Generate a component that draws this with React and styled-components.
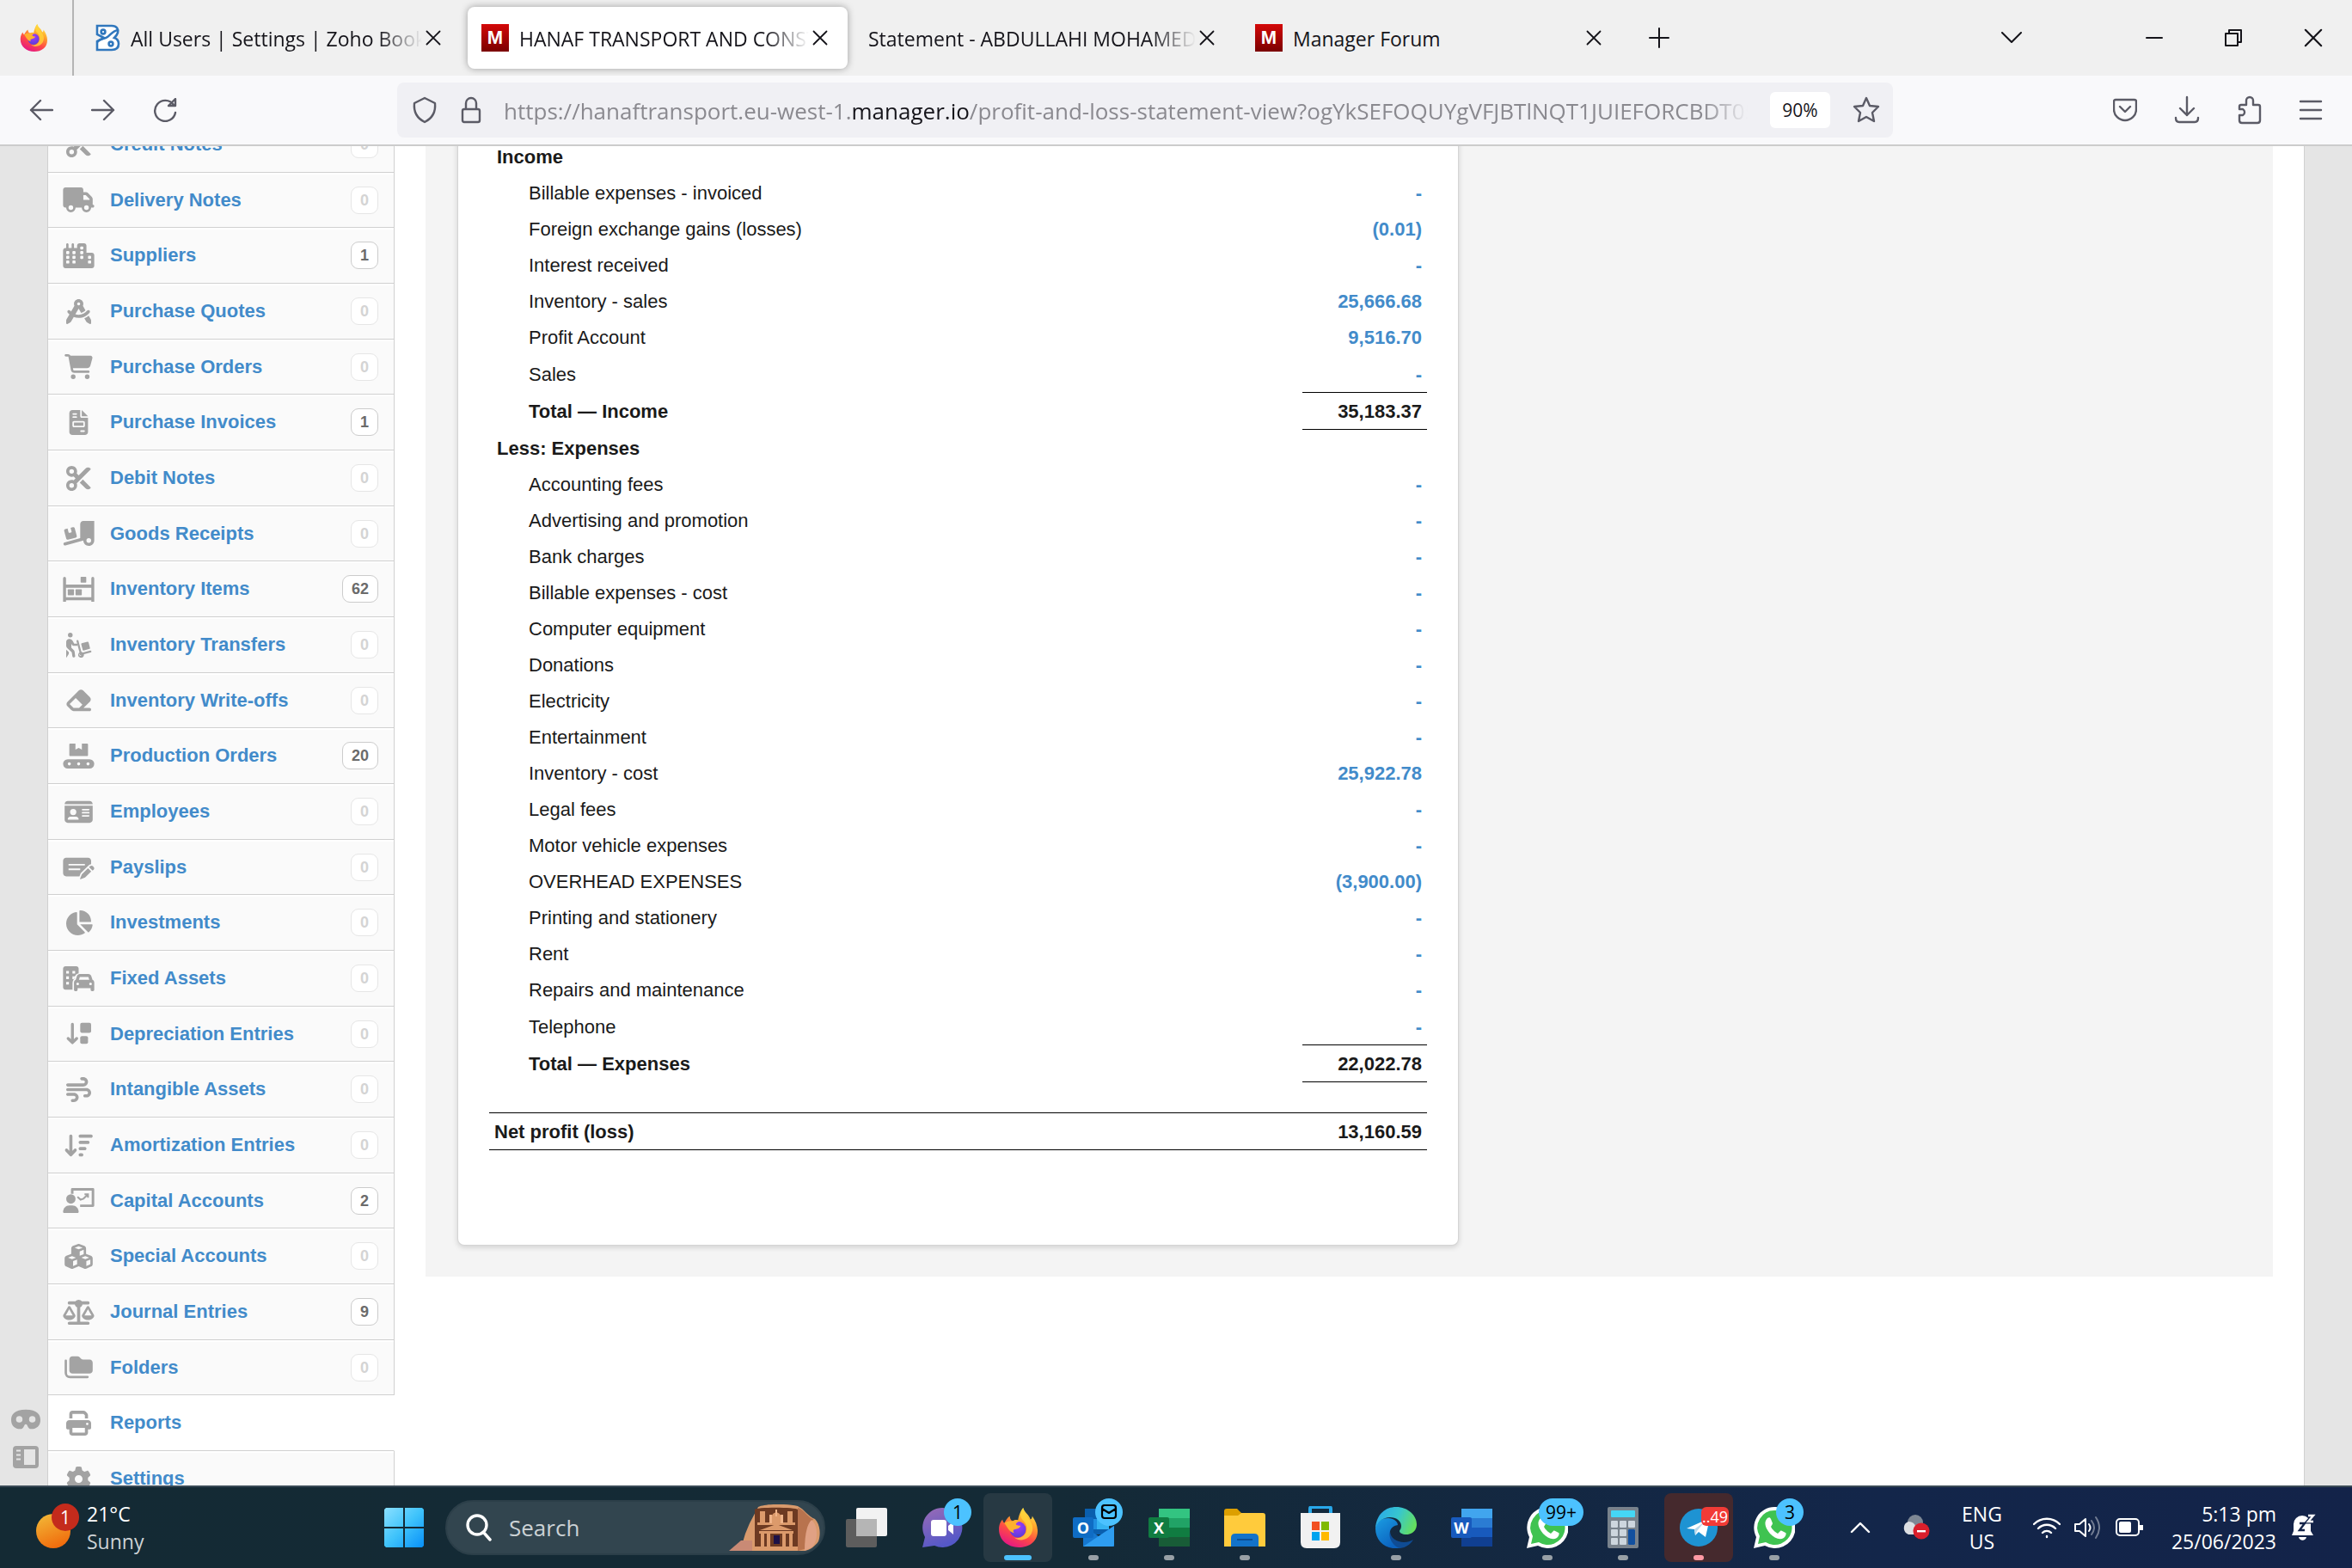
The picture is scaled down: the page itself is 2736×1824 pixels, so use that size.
import React from 'react';
import styled, { createGlobalStyle, css } from 'styled-components';
import {
    FaScissors, FaTruck, FaCity, FaCompassDrafting, FaCartShopping, FaFileInvoice,
    FaTruckRampBox, FaEraser, FaIdCard, FaChartPie, FaWind, FaArrowDownWideShort,
    FaCubes, FaScaleBalanced, FaPrint, FaGear, FaMask,
} from 'react-icons/fa6';

const GlobalStyle = createGlobalStyle`
    * { box-sizing: border-box; }
    html, body, #root { height: 100%; }
    body {
        margin: 0;
        overflow: hidden;
        font-family: "Liberation Sans", Arial, sans-serif;
        font-size: 22px;
        color: #1a1a1a;
        background: #e5e5e5;
    }
    button {
        border: 0;
        padding: 0;
        background: none;
        font: inherit;
        color: inherit;
        cursor: pointer;
    }
    a { color: #428bca; text-decoration: none; }
    svg { display: block; flex-shrink: 0; }
`;

const uiFont = css`font-family: "Open Sans", "Noto Sans", sans-serif;`;

const Desktop = styled.div`
    display: flex;
    flex-direction: column;
    height: 100vh;
`;

/* ---------- browser chrome ---------- */

const TabBar = styled.header`
    ${uiFont}
    display: flex;
    align-items: center;
    flex-shrink: 0;
    height: 88px;
    background: #f0f0f0;
    font-size: 23px;
    color: #15141a;
`;

const PinnedTab = styled.button`
    display: flex;
    align-items: center;
    justify-content: center;
    width: 86px;
    height: 88px;
    padding-right: 6px;
    border-right: 2px solid #b4b4b4;
`;

const Tabs = styled.div`
    display: flex;
    gap: 8px;
    margin: 0 24px 0 8px;
`;

const Tab = styled.div`
    display: flex;
    align-items: center;
    width: 442px;
    height: 72px;
    padding: 0 23px 0 16px;
    border-radius: 8px;
    background: ${(props) => (props.$active ? '#fff' : 'transparent')};
    box-shadow: ${(props) => (props.$active ? '0 0 8px rgba(0,0,0,0.35)' : 'none')};
`;

const TabTitle = styled.button`
    flex: 1;
    min-width: 0;
    margin: 0 4px 0 ${(props) => (props.$icon ? '12px' : '0')};
    padding-top: 2px;
    overflow: hidden;
    white-space: nowrap;
    text-align: left;
    line-height: 36px;
    mask-image: ${(props) => (props.$fade ? 'linear-gradient(to left, transparent, #000 52px)' : 'none')};
`;

const CloseTab = styled.button`
    width: 18px;
    height: 18px;
`;

const WindowButtons = styled.div`
    display: flex;
    align-items: center;
    margin-left: auto;
    padding-right: 34px;
    gap: 72px;
`;

const ListTabs = styled.button`
    margin-right: 72px;
`;

const Toolbar = styled.div`
    ${uiFont}
    display: flex;
    align-items: center;
    flex-shrink: 0;
    height: 82px;
    padding: 0 34px;
    background: #f9f9fb;
    border-bottom: 2px solid #ccc;
    color: #5b5b66;
`;

const ToolGroup = styled.div`
    display: flex;
    gap: 44px;
`;

const AddressBar = styled.div`
    display: flex;
    align-items: center;
    flex: 1;
    min-width: 0;
    height: 64px;
    margin: 0 256px;
    padding: 0 15px 0 16px;
    gap: 26px;
    border-radius: 8px;
    background: #f0f0f4;
`;

const Address = styled.div`
    flex: 1;
    min-width: 0;
    padding-top: 2px;
    overflow: hidden;
    white-space: nowrap;
    font-size: 26px;
    line-height: 40px;
    color: #8a898f;
    mask-image: linear-gradient(to left, transparent, #000 52px);

    b {
        font-weight: 400;
        color: #15141a;
    }
`;

const ZoomLevel = styled.button`
    width: 70px;
    height: 42px;
    border-radius: 6px;
    background: #fff;
    font-size: 21px;
    color: #15141a;
`;

/* ---------- page ---------- */

const PageView = styled.div`
    display: flex;
    flex: 1;
    min-height: 0;
    overflow: hidden;
`;

const Rail = styled.div`
    display: flex;
    flex-direction: column;
    align-items: center;
    justify-content: flex-end;
    gap: 14px;
    width: 55px;
    padding: 0 0 20px 4px;
    color: #a3a3a3;
`;

// the page is scrolled, its first row is half hidden
const Page = styled.div`
    display: flex;
    align-items: flex-start;
    align-self: flex-start;
    flex: 1;
    margin: -34px 55px 0 0;
    border: solid #d0d0d0;
    border-width: 0 1px;
    background: #fff;
`;

const Nav = styled.nav`
    width: 403px;
    flex-shrink: 0;
`;

const NavRow = styled.a`
    display: flex;
    align-items: center;
    gap: 18px;
    height: 65px;
    padding: 0 18px 0 17px;
    border-bottom: 1px solid #d0d0d0;
    border-right: 1px solid ${(props) => (props.$current ? '#fff' : '#d0d0d0')};
    background: ${(props) => (props.$current ? '#fff' : '#fafafa')};
    box-shadow: inset 0 2px #fff;
    font-weight: bold;
    line-height: 26px;

    &:nth-child(3n + 2) { height: 64px; }

    > svg {
        width: 37px;
        height: 29px;
        color: #a3a3a3;
    }
`;

const Count = styled.span`
    margin-left: auto;
    padding: 0 10px;
    border: 1px solid ${(props) => (props.$empty ? '#e6e6e6' : '#ccc')};
    border-radius: 9px;
    background: #fff;
    font-size: 18px;
    line-height: 30px;
    color: ${(props) => (props.$empty ? '#d4d4d4' : '#6b6b6b')};
`;

const Panel = styled.main`
    flex: 1;
    margin: 0 36px;
    padding: 0 37px 36px;
    background: #f4f4f4;
`;

const Sheet = styled.section`
    width: 1165px;
    padding: 25px 36px 110px;
    border: 1px solid #d4d4d4;
    border-top: 0;
    border-radius: 0 0 8px 8px;
    background: #fff;
    box-shadow: 0 2px 6px rgba(0,0,0,0.15);
`;

const Report = styled.table`
    width: 100%;
    border-collapse: separate;
    border-spacing: 0;

    th, td {
        height: 42px;
        padding: 2px 6px 0;
        line-height: 26px;
        text-align: left;
        font-weight: normal;
    }
    td:last-child {
        width: 145px;
        text-align: right;
        font-weight: bold;
    }
`;

const HeadRow = styled.tr`
    && th {
        padding-left: 9px;
        font-weight: bold;
    }
`;

const ItemRow = styled.tr`
    && th { padding-left: 46px; }
    &&:nth-last-child(2) > * { height: 43px; }
`;

const TotalRow = styled.tr`
    && > * {
        height: 44px;
        font-weight: bold;
    }
    && th { padding-left: 46px; }
    && td {
        border: solid #000;
        border-width: 1px 0;
    }
`;

const NetRow = styled.tr`
    && > * {
        height: 44px;
        border: solid #000;
        border-width: 1px 0;
        font-weight: bold;
    }
`;

const Spacer = styled.tr`
    && > td { height: 35px; }
`;

/* ---------- taskbar ---------- */

const Taskbar = styled.footer`
    ${uiFont}
    display: flex;
    align-items: center;
    flex-shrink: 0;
    height: 96px;
    border-top: 2px solid #3a4a56;
    background: linear-gradient(90deg, #142a34 0%, #142a36 45%, #13264a 80%, #132349 100%);
    font-size: 23px;
    line-height: 32px;
    color: #fff;
`;

const Weather = styled.button`
    display: flex;
    align-items: center;
    gap: 8px;
    width: 430px;
    padding-left: 40px;
    text-align: left;

    small {
        display: block;
        font-size: 23px;
        color: #cdd3d6;
    }
`;

const Apps = styled.div`
    display: flex;
    gap: 8px;
`;

const App_ = styled.button`
    position: relative;
    display: flex;
    align-items: center;
    justify-content: center;
    width: 80px;
    height: 80px;
    border-radius: 8px;
    background: ${(props) => props.$bg || 'transparent'};

    &::after {
        content: "";
        position: absolute;
        bottom: 2px;
        left: 50%;
        width: ${(props) => (props.$focus ? '32px' : '12px')};
        height: 6px;
        border-radius: 3px;
        transform: translateX(-50%);
        background: ${(props) => props.$mark || 'transparent'};
    }
`;

const Badge = styled.span`
    position: absolute;
    top: 6px;
    left: ${(props) => (props.$wide ? '30px' : '42px')};
    display: flex;
    align-items: center;
    justify-content: center;
    min-width: 32px;
    height: 32px;
    padding: 0 ${(props) => (props.$wide ? '8px' : '0')};
    border-radius: 16px;
    background: #4cc2ff;
    font-size: 21px;
    color: #000;
`;

const RedBadge = styled(Badge)`
    top: 16px;
    left: 43px;
    height: 22px;
    border-radius: 6px;
    background: #f23b36;
    font-size: 18px;
    color: #fff;
`;

const SearchBox = styled.label`
    display: flex;
    align-items: center;
    gap: 20px;
    width: 442px;
    height: 64px;
    margin: auto 0;
    padding: 0 4px 0 22px;
    border: 2px solid #2c3f49;
    border-radius: 32px;
    background: #32454f;

    input {
        flex: 1;
        min-width: 0;
        padding: 0;
        border: 0;
        outline: 0;
        background: none;
        font: inherit;
        font-size: 26px;
        color: #fff;
    }
    input::placeholder { color: #ccd2d5; opacity: 1; }
`;

const Tray = styled.div`
    display: flex;
    align-items: center;
    margin-left: auto;
    padding-right: 42px;
`;

const Language = styled.button`
    margin: 0 36px;
    text-align: center;
`;

const Status = styled.button`
    display: flex;
    align-items: center;
    gap: 16px;
`;

const Clock = styled.button`
    margin: 0 18px 0 32px;
    text-align: right;
`;

const Overflow = styled.button`
    margin-right: 36px;
`;

/* ---------- small drawings ---------- */

const Line = ({ d, w = 28, h = 28, box = '0 0 28 28', sw = 2.4, children, ...rest }) => (
    <svg width={w} height={h} viewBox={box} fill="none" stroke="currentColor" strokeWidth={sw}
        strokeLinecap="round" strokeLinejoin="round" {...rest}>
        {d && <path d={d} />}
        {children}
    </svg>
);

const CloseX = ({ size = 18 }) => (
    <Line w={size} h={size} box="0 0 18 18" sw={1.8} d="M1.5 1.5l15 15M16.5 1.5l-15 15" />
);

const Firefox = ({ size, id }) => (
    <svg width={size} height={size} viewBox="0 0 44 44">
        <defs>
            <linearGradient id={id + 'a'} x1="0.8" y1="0" x2="0.3" y2="1">
                <stop offset="0" stopColor="#fff44f" />
                <stop offset="0.35" stopColor="#ffa22b" />
                <stop offset="0.65" stopColor="#ff4a45" />
                <stop offset="1" stopColor="#e31587" />
            </linearGradient>
            <radialGradient id={id + 'b'} cx="0.5" cy="0.3" r="0.7">
                <stop offset="0" stopColor="#a238ff" />
                <stop offset="1" stopColor="#5b3fd6" />
            </radialGradient>
        </defs>
        <path fill={`url(#${id}a)`} d="M28 0c1 5 7 8 8 13 2-1 2-3 2-4 4 6 6 11 6 17 0 11-9 18-21 18S1 36 1 24c0-5 2-9 4-11 0 2 1 3 2 4 1-2 3-6 6-8 0 2 1 4 2 5l7 1c1-6 3-12 6-15z" />
        <circle cx="22" cy="24" r="9" fill={`url(#${id}b)`} />
        <path fill="#ffb02e" d="M7 17c3-2 6-3 9-2 2-2 6-2 9 0-3 0-5 2-5 3 0 2 4 2 5 2-1 3-4 3-6 4-2 0-3 2-1 4-6-1-7-6-11-11z" />
        <path fill="#ffd43a" d="M28 0c-3 4-4 9-1 13 4 4 6 8 4 14-2 5-8 8-13 6 6 5 15 3 19-4 4-9-1-14-4-18-2-3-5-6-5-11z" opacity=".8" />
    </svg>
);

const Zoho = () => (
    <svg width="30" height="32" viewBox="0 0 30 32" fill="none" stroke="#3077bd" strokeWidth="2.6">
        <path fill="#fff" d="M3 2h17c6 0 8 4 7 8-1 3-3 5-4 6 3 1 5 4 5 7 0 5-3 7-8 7H3V20l8-4-8-4z" />
        <path d="M3 21c4-5 8-3 12-6s6-7 12-8" />
        <circle cx="10" cy="9" r="2.4" />
        <circle cx="19" cy="23" r="2.4" />
    </svg>
);

const MBadge = styled.span`
    display: flex;
    align-items: center;
    justify-content: center;
    flex-shrink: 0;
    width: 32px;
    height: 32px;
    background: linear-gradient(#d40808, #7a0000);
    font: bold 22px "Liberation Sans", Arial, sans-serif;
    color: #fff;
`;

// wide glyphs share the 640x512 grid of the icon font
const Glyph = ({ children, box = '0 0 640 512' }) => (
    <svg viewBox={box} fill="currentColor">{children}</svg>
);

const Shelves = () => (
    <Glyph>
        <path d="M0 30a30 30 0 0160 0v130h520V30a30 30 0 0160 0v482h-60v-30H60v30H0zM60 225v195h520V225z" fillRule="evenodd" />
        <rect x="360" y="0" width="116" height="118" rx="12" />
        <rect x="96" y="256" width="128" height="124" rx="12" />
        <rect x="256" y="256" width="128" height="124" rx="12" />
    </Glyph>
);

const PersonDolly = () => (
    <Glyph box="0 0 512 512">
        <circle cx="84" cy="48" r="48" />
        <path d="M0 190c0-38 28-62 66-62 34 0 54 16 70 44l28 52h52c28 0 28 46 0 46h-66c-14 0-22-6-30-18l-14-24v80l50 50c10 10 14 20 16 32l12 88c4 34-50 42-56 8l-14-86L32 328C8 306 0 290 0 262z" />
        <path d="M0 350l56 50-4 36-40 66c-4 8-12 8-12 2z" />
        <path d="M232 170l66 250M298 440l200-54" fill="none" stroke="currentColor" strokeWidth="40" strokeLinecap="round" />
        <path fillRule="evenodd" d="M290 396a60 60 0 110 116 60 60 0 010-116zm0 38a20 20 0 100 40 20 20 0 000-40z" />
        <path d="M308 236c-3-10 2-18 11-21l118-30c10-3 18 2 21 11l31 116c3 10-2 18-11 21l-118 32c-10 3-18-2-21-11z" />
    </Glyph>
);

const Conveyor = () => (
    <Glyph>
        <path d="M144 0h110v124l66-36 66 36V0h110c10 0 16 6 16 16v224c0 10-6 16-16 16H144c-10 0-16-6-16-16V16c0-10 6-16 16-16z" />
        <path fillRule="evenodd" d="M96 320h448a96 96 0 010 192H96a96 96 0 010-192zm32 64a32 32 0 100 64 32 32 0 000-64zm192 0a32 32 0 100 64 32 32 0 000-64zm192 0a32 32 0 100 64 32 32 0 000-64z" />
    </Glyph>
);

const CheckPen = () => (
    <Glyph>
        <path fillRule="evenodd" d="M64 64h448c35 0 64 29 64 64v72c-20 2-38 10-52 24L362 386l-26 62H64c-35 0-64-29-64-64V128c0-35 29-64 64-64zm48 128v32h336v-32zm0 96v32h240v-32z" />
        <path d="M386 408l126-126 66 66-126 126-90 34c-8 3-14-3-12-12zM534 260l18-18c18-18 44-18 60-2l14 14c18 18 18 42 0 60l-20 18z" />
    </Glyph>
);

const BuildingCar = () => (
    <Glyph>
        <path fillRule="evenodd" d="M48 0h224c26 0 48 22 48 48v96c-40 8-66 30-80 68l-24 62c-14 18-22 40-22 66v140H48c-26 0-48-22-48-48V48C0 22 22 0 48 0zm16 96v56h56V96zm128 0v56h56V96zM64 208v56h56v-56zm128 0v56h34l14-56zM64 320v56h56v-56z" />
        <path fillRule="evenodd" d="M344 160h176c28 0 52 18 60 44l24 74c22 10 36 32 36 58v150c0 14-12 26-26 26h-22c-14 0-26-12-26-26v-38H298v38c0 14-12 26-26 26h-22c-14 0-26-12-26-26V336c0-26 14-48 36-58l24-74c8-26 32-44 60-44zm0 62l-18 58h212l-18-58zM300 334a28 28 0 100 56 28 28 0 000-56zm264 0a28 28 0 100 56 28 28 0 000-56z" />
    </Glyph>
);

const BigSmall = () => (
    <Glyph box="0 0 512 512">
        <path d="M128 60v370M40 352l88 88 88-88" fill="none" stroke="currentColor" strokeWidth="60" strokeLinecap="round" strokeLinejoin="round" />
        <rect x="288" y="32" width="224" height="208" rx="36" />
        <rect x="288" y="304" width="160" height="160" rx="36" />
    </Glyph>
);

const Presenter = () => (
    <Glyph>
        <path d="M188 120V28h426v336H350" fill="none" stroke="currentColor" strokeWidth="52" strokeLinejoin="round" />
        <path d="M296 180l64 58 60 -20 88-84M440 128h72v72" fill="none" stroke="currentColor" strokeWidth="36" />
        <circle cx="160" cy="224" r="96" />
        <path d="M0 490c0-74 56-134 130-134h60c74 0 130 60 130 134 0 12-10 22-22 22H22c-12 0-22-10-22-22z" />
    </Glyph>
);

const Folders = () => (
    <Glyph box="0 0 576 512">
        <path d="M24 120v250c0 50 34 86 86 86h360" fill="none" stroke="currentColor" strokeWidth="48" strokeLinecap="round" />
        <path d="M96 96c0-35 29-64 64-64h102c18 0 34 6 46 18l28 28c12 12 28 18 46 18h130c35 0 64 29 64 64v160c0 35-29 64-64 64H160c-35 0-64-29-64-64z" />
    </Glyph>
);

const SidebarGlyph = () => (
    <svg width="30" height="26" viewBox="0 0 30 26" fill="currentColor">
        <path fillRule="evenodd" d="M4 0h22a4 4 0 014 4v18a4 4 0 01-4 4H4a4 4 0 01-4-4V4a4 4 0 014-4zm9 4v18h13V4zM4 4.500v2h5v-2zm0 5v2h5v-2zm0 5v2h5v-2z" />
    </svg>
);

const Sun = () => (
    <svg width="53" height="56" viewBox="0 0 53 56">
        <defs>
            <linearGradient id="sun" x1="0.2" y1="0" x2="0.6" y2="1">
                <stop offset="0" stopColor="#f2b736" />
                <stop offset="1" stopColor="#f06a0c" />
            </linearGradient>
        </defs>
        <circle cx="22" cy="32" r="20" fill="url(#sun)" />
        <circle cx="36" cy="16" r="16" fill="#c42b1c" />
        <text x="36" y="24" textAnchor="middle" fontSize="21" fontFamily="Open Sans, sans-serif" fill="#fff">1</text>
    </svg>
);

const WindowsLogo = () => (
    <svg width="46" height="46" viewBox="0 0 46 46">
        <defs>
            <linearGradient id="win" x1="0" y1="0" x2="1" y2="1">
                <stop offset="0" stopColor="#8be0ff" />
                <stop offset="0.5" stopColor="#3fc3fb" />
                <stop offset="1" stopColor="#0890f8" />
            </linearGradient>
        </defs>
        <path fill="url(#win)" d="M2 0h20v22H0V2zM24 0h20l2 2v20H24zM0 24h22v22H2l-2-2zM24 24h22v20l-2 2H24z" />
    </svg>
);

const Petra = () => (
    <svg width="106" height="54" viewBox="0 0 106 54">
        <path fill="#d99a6c" d="M13 54l6-20 5-12L34 3c8-4 34-4 46-1 8 4 12 12 20 15 6 6 7 18 4 26-4 6-10 10-16 11z" />
        <path fill="#b8734e" d="M80 4c8 2 12 12 18 13-4 6-8 24-6 34l-12 3z" />
        <path fill="#e0a184" d="M88 54c0-16 2-30 8-36 8 6 8 26 0 32z" />
        <path fill="#6d3a22" d="M30 50V6c0-3 48-3 50 0v44z" />
        <path fill="#dc9a6b" d="M36 8h6v14h-6zM68 8h6v14h-6zM49 17c0-10 12-10 12 0v6H49zM33 21h44v3H33zM36 30l19-7 19 7zM35 31h40v3H35zM37 34h4v16h-4zM44 34h4v16h-4zM62 34h4v16h-4zM70 34h4v16h-4zM30 49h50v5H30z" />
        <path fill="#f0b489" d="M54 6h2v8h-2zM47 12h3v10h-3zM60 12h3v10h-3z" />
        <path fill="#1d1147" d="M52 36h7v10h-7z" />
        <path fill="#c98a75" d="M0 54l14-12h13v12z" />
    </svg>
);

const TaskView = () => (
    <svg width="48" height="46" viewBox="0 0 48 46">
        <rect x="12" y="0" width="36" height="33" rx="2" fill="#f2f2f2" />
        <rect x="0" y="13" width="36" height="33" rx="2" fill="#5d5d5d" />
        <path d="M12 13h24v20H12z" fill="#b5b5b5" />
    </svg>
);

const Chat = () => (
    <svg width="48" height="48" viewBox="0 0 48 48">
        <defs>
            <linearGradient id="chat" x1="0" y1="0" x2="0.4" y2="1">
                <stop offset="0" stopColor="#9a6bb5" />
                <stop offset="1" stopColor="#5558c8" />
            </linearGradient>
        </defs>
        <path fill="url(#chat)" d="M24 1a23 23 0 11-9 44L1 47l3-12A23 23 0 0124 1z" />
        <rect x="11" y="15" width="18" height="19" rx="3" fill="#fff" />
        <path fill="#fff" d="M31 22l6-5v15l-6-5z" />
    </svg>
);

const Tile = styled.span`
    position: absolute;
    left: 16px;
    top: 28px;
    display: flex;
    align-items: center;
    justify-content: center;
    width: 24px;
    height: 24px;
    border-radius: 2px;
    background: ${(props) => props.$color};
    font: bold 18px "Open Sans", sans-serif;
    color: #fff;
`;

const OfficeBack = ({ colors }) => (
    <svg width="48" height="44" viewBox="0 0 48 44">
        {colors.map((c, i) => <rect key={i} x="12" y={i * 11} width="36" height="11" fill={c} />)}
    </svg>
);

const OutlookBack = () => (
    <svg width="48" height="44" viewBox="0 0 48 44">
        <path fill="#0a5fae" d="M14 0h28v30H14z" />
        <path fill="#1f8ee0" d="M28 0h14v12H28zM14 12h14v12H14z" />
        <path fill="#35b3f2" d="M28 12h14v12H28z" />
        <path fill="#1577cf" d="M12 20l18 12 18-12v24H12z" />
        <path fill="#2e9df0" d="M12 44l36-24v22c0 1-1 2-2 2z" />
    </svg>
);

const Mail = () => (
    <Line w={20} h={18} box="0 0 20 18" sw={2.2} d="M2 4q0-3 3-3h10q3 0 3 3v9q0 3-3 3H5q-3 0-3-3zM2 5l8 5 8-5" />
);

const Explorer = () => (
    <svg width="48" height="44" viewBox="0 0 48 44">
        <path fill="#dd9f00" d="M0 3q0-3 3-3h12l5 5v4H0z" />
        <path fill="#ffcb3c" d="M0 8h16l4-3h25q3 0 3 3v36H0z" />
        <path fill="#1373ca" d="M8 44V34q0-5 5-5h22q5 0 5 5v10z" />
        <path fill="#0b4f96" d="M15 35h18v2H15z" />
    </svg>
);

const Store = () => (
    <svg width="48" height="50" viewBox="0 0 48 50">
        <path d="M12 12V3q0-2 2-2h20q2 0 2 2v9" fill="none" stroke="#28a8ea" strokeWidth="4" />
        <path fill="#f1f1f1" d="M1 8h46v34q0 7-7 7H8q-7 0-7-7z" />
        <path fill="#f25022" d="M14 18h9v10h-9z" />
        <path fill="#7fba00" d="M25 18h9v10h-9z" />
        <path fill="#00a4ef" d="M14 30h9v10h-9z" />
        <path fill="#ffb900" d="M25 30h9v10h-9z" />
    </svg>
);

const Edge = () => (
    <svg width="48" height="48" viewBox="0 0 48 48">
        <defs>
            <linearGradient id="edgeTop" x1="0" y1="0.3" x2="1" y2="0.6">
                <stop offset="0" stopColor="#2aa9e8" />
                <stop offset="0.5" stopColor="#37c6cf" />
                <stop offset="1" stopColor="#66e05a" />
            </linearGradient>
            <linearGradient id="edgeLow" x1="0" y1="0" x2="0.6" y2="1">
                <stop offset="0" stopColor="#1b9de2" />
                <stop offset="1" stopColor="#0b62bf" />
            </linearGradient>
        </defs>
        <path fill="#0f4c94" d="M17 28c0 8 8 13 16 13 5 0 9-2 11-3-4 7-12 11-20 10C14 46 10 34 17 24z" />
        <path fill="url(#edgeLow)" d="M0 25C1 16 8 13 15 13c6 0 11 4 11 8-8 1-11 8-9 15 2 6 6 10 11 12C12 50 0 40 0 25z" />
        <path fill="url(#edgeTop)" d="M0 25C1 8 12 0 24 0c14 0 24 10 24 20 0 8-6 12-12 12-5 0-8-2-8-4 0-1 2-2 2-6 0-6-6-10-13-10C9 12 2 17 0 25z" />
    </svg>
);

const WhatsApp = () => (
    <svg width="48" height="48" viewBox="0 0 48 48">
        <path fill="#fff" d="M24 0a24 24 0 11-11 45L0 48l3-13A24 24 0 0124 0z" />
        <path fill="#3fc351" d="M25 4a20 20 0 11-11 37l-9 2 2-9A20 20 0 0125 4z" />
        <path fill="#fff" d="M16 13c2-1 3-1 4 1l2 5c0 1-1 2-2 4 2 4 5 6 8 8l3-3c1-1 2 0 6 2 1 0 1 4-2 6-5 3-11 0-16-5-5-6-8-13-3-18z" />
    </svg>
);

const Calculator = () => (
    <svg width="36" height="48" viewBox="0 0 36 48">
        <rect width="36" height="48" rx="2" fill="#78828c" />
        <rect x="4" y="4" width="28" height="8" rx="1" fill="#45d6f5" />
        {[16, 26, 36].map((y) => [4, 14, 24].map((x) => (
            <rect key={x + '-' + y} x={x} y={y} width="8" height="8" rx="1" fill="#cdd6de" />
        )))}
        <rect x="24" y="26" width="8" height="18" rx="1" fill="#12509f" />
    </svg>
);

const Telegram = () => (
    <svg width="44" height="44" viewBox="0 0 44 44">
        <circle cx="22" cy="22" r="22" fill="#1e93d3" />
        <path fill="#fff" d="M8 23l27-12-5 22-8-6-4 4-1-7z" />
        <path fill="#b9d8ea" d="M17 24l12-9-9 11-2 5z" />
    </svg>
);

const Cloud = () => (
    <svg width="34" height="30" viewBox="0 0 34 30">
        <circle cx="16" cy="9" r="9" fill="#7d8794" />
        <path fill="#dcdfe3" d="M8 8c6 0 8 4 12 10v5H8A8 8 0 018 8z" />
        <circle cx="23" cy="19" r="9.500" fill="#d91f2c" />
        <path fill="#fff" d="M18 18h10v2.400H18z" />
    </svg>
);

const Battery = () => (
    <svg width="33" height="24" viewBox="0 0 33 24" fill="none" stroke="#fff" strokeWidth="2">
        <rect x="1" y="2" width="26" height="19" rx="4" />
        <rect x="5" y="6" width="12" height="11" rx="1" fill="#fff" />
        <path d="M30 9v6" strokeWidth="4" />
    </svg>
);

const Bell = () => (
    <svg width="28" height="32" viewBox="0 0 28 32">
        <path fill="#fff" d="M12 2a10 10 0 0110 10v8l3 5H0l2-5v-8A10 10 0 0112 2zM8 27h9c-1 5-8 5-9 0z" />
        <path d="M19 2h6l-6 7h6" fill="none" stroke="#132349" strokeWidth="5" />
        <path d="M9 11h6l-6 8h6" fill="none" stroke="#132349" strokeWidth="2.4" />
        <path d="M19 2h6l-6 7h6" fill="none" stroke="#fff" strokeWidth="2.4" />
    </svg>
);

/* ---------- data ---------- */

const tabs = [
    { title: 'All Users | Settings | Zoho Books', icon: <Zoho />, fade: true },
    { title: 'HANAF TRANSPORT AND CONST', icon: <MBadge>M</MBadge>, fade: true, active: true },
    { title: 'Statement - ABDULLAHI MOHAMED', fade: true },
    { title: 'Manager Forum', icon: <MBadge>M</MBadge> },
];

const navItems = [
    ['Credit Notes', FaScissors, 0],
    ['Delivery Notes', FaTruck, 0],
    ['Suppliers', FaCity, 1],
    ['Purchase Quotes', FaCompassDrafting, 0],
    ['Purchase Orders', FaCartShopping, 0],
    ['Purchase Invoices', FaFileInvoice, 1],
    ['Debit Notes', FaScissors, 0],
    ['Goods Receipts', FaTruckRampBox, 0],
    ['Inventory Items', Shelves, 62],
    ['Inventory Transfers', PersonDolly, 0],
    ['Inventory Write-offs', FaEraser, 0],
    ['Production Orders', Conveyor, 20],
    ['Employees', FaIdCard, 0],
    ['Payslips', CheckPen, 0],
    ['Investments', FaChartPie, 0],
    ['Fixed Assets', BuildingCar, 0],
    ['Depreciation Entries', BigSmall, 0],
    ['Intangible Assets', FaWind, 0],
    ['Amortization Entries', FaArrowDownWideShort, 0],
    ['Capital Accounts', Presenter, 2],
    ['Special Accounts', FaCubes, 0],
    ['Journal Entries', FaScaleBalanced, 9],
    ['Folders', Folders, 0],
    ['Reports', FaPrint],
    ['Settings', FaGear],
];

const income = [
    ['Billable expenses - invoiced', '-'],
    ['Foreign exchange gains (losses)', '(0.01)'],
    ['Interest received', '-'],
    ['Inventory - sales', '25,666.68'],
    ['Profit Account', '9,516.70'],
    ['Sales', '-'],
];

const expenses = [
    ['Accounting fees', '-'],
    ['Advertising and promotion', '-'],
    ['Bank charges', '-'],
    ['Billable expenses - cost', '-'],
    ['Computer equipment', '-'],
    ['Donations', '-'],
    ['Electricity', '-'],
    ['Entertainment', '-'],
    ['Inventory - cost', '25,922.78'],
    ['Legal fees', '-'],
    ['Motor vehicle expenses', '-'],
    ['OVERHEAD EXPENSES', '(3,900.00)'],
    ['Printing and stationery', '-'],
    ['Rent', '-'],
    ['Repairs and maintenance', '-'],
    ['Telephone', '-'],
];

const dot = '#98a0a6';

function Group({ title, rows, totalLabel, total }) {
    return (
        <tbody>
            <HeadRow><th colSpan={2}>{title}</th></HeadRow>
            {rows.map(([name, value]) => (
                <ItemRow key={name}>
                    <th scope="row">{name}</th>
                    <td><a href="#account">{value}</a></td>
                </ItemRow>
            ))}
            <TotalRow>
                <th scope="row">{totalLabel}</th>
                <td>{total}</td>
            </TotalRow>
        </tbody>
    );
}

function Browser() {
    return (
        <>
            <TabBar>
                <PinnedTab aria-label="Firefox View"><Firefox size={32} id="ffs" /></PinnedTab>
                <Tabs>
                    {tabs.map((tab) => (
                        <Tab key={tab.title} $active={tab.active}>
                            {tab.icon}
                            <TabTitle $icon={!!tab.icon} $fade={tab.fade}>{tab.title}</TabTitle>
                            <CloseTab aria-label="Close tab"><CloseX /></CloseTab>
                        </Tab>
                    ))}
                </Tabs>
                <button aria-label="New tab">
                    <Line w={40} h={24} box="-8 0 40 24" sw={2} d="M1 12h22M12 1v22" />
                </button>
                <WindowButtons>
                    <ListTabs aria-label="List all tabs"><Line w={24} h={14} box="0 0 24 14" sw={2} d="M1 1l11 11 11-11" /></ListTabs>
                    <button aria-label="Minimize"><Line w={20} h={20} box="0 0 20 20" sw={2} d="M1 10h18" /></button>
                    <button aria-label="Restore">
                        <Line w={20} h={20} box="0 0 20 20" sw={2} d="M1 5h14v14H1zM5 5V1h14v14h-4" />
                    </button>
                    <button aria-label="Close"><CloseX size={22} /></button>
                </WindowButtons>
            </TabBar>
            <Toolbar>
                <ToolGroup>
                    <button aria-label="Back"><Line d="M27 14H2M13 3L2 14l11 11" /></button>
                    <button aria-label="Forward"><Line d="M1 14h25M15 3l11 11-11 11" /></button>
                    <button aria-label="Reload"><Line d="M26 17A12 12 0 1124 8M26 1v8h-8z" /></button>
                </ToolGroup>
                <AddressBar>
                    <Line w={32} h={32} box="0 0 32 32" d="M16 2l12 6c1 10-2 17-12 22C6 25 3 18 4 8z" />
                    <Line w={24} h={32} box="0 0 24 32" d="M4 15h16q2 0 2 2v11q0 2-2 2H4q-2 0-2-2V17q0-2 2-2zM6 15V8a6 6 0 0112 0v7" />
                    <Address role="textbox" aria-label="Address" contentEditable suppressContentEditableWarning spellCheck={false}>
                        https://hanaftransport.eu-west-1.<b>manager.io</b>/profit-and-loss-statement-view?ogYkSEFOQUYgVFJBTlNQT1JUIEFORCBDT05
                    </Address>
                    <ZoomLevel>90%</ZoomLevel>
                    <button aria-label="Bookmark">
                        <Line w={32} h={32} box="0 0 32 32" d="M16 2l4 9 10 1-7 7 2 10-9-5-9 5 2-10-7-7 10-1z" />
                    </button>
                </AddressBar>
                <ToolGroup>
                    <button aria-label="Pocket"><Line d="M3 2h22q2 0 2 2v9a13 13 0 01-26 0V4q0-2 2-2zM8 10l6 6 6-6" /></button>
                    <button aria-label="Downloads"><Line d="M14-1v21M6 12l8 8 8-8M1 23q0 5 4 5h18q4 0 4-5" overflow="visible" /></button>
                    <button aria-label="Extensions"><Line overflow="visible" d="M11 8V3a4 4 0 018 0v5h6q2 0 2 2v16q0 3-3 3H6q-3 0-3-3v-6h4a4 4 0 000-7H3v-3q0-2 2-2z" /></button>
                    <button aria-label="Menu"><Line d="M2 4h24M2 14h24M2 24h24" /></button>
                </ToolGroup>
            </Toolbar>
        </>
    );
}

function TaskBar() {
    return (
        <Taskbar>
            <Weather>
                <Sun />
                <span>21°C<small>Sunny</small></span>
            </Weather>
            <Apps>
                <App_ aria-label="Start"><WindowsLogo /></App_>
                <SearchBox>
                    <Line w={30} h={32} box="0 0 30 32" sw={3.4} d="M20 21l8 9M13 2a11 11 0 100 22 11 11 0 000-22z" />
                    <input placeholder="Search" aria-label="Search" />
                    <Petra />
                </SearchBox>
                <App_ aria-label="Task view"><TaskView /></App_>
                <App_ aria-label="Chat"><Chat /><Badge>1</Badge></App_>
                <App_ aria-label="Firefox" $bg="#273943" $mark="#4cc2ff" $focus><Firefox size={46} id="ffl" /></App_>
                <App_ aria-label="Outlook" $mark={dot}><OutlookBack /><Tile $color="#0f6cc4">O</Tile><Badge><Mail /></Badge></App_>
                <App_ aria-label="Excel" $mark={dot}><OfficeBack colors={['#33c481', '#21a366', '#107c41', '#185c37']} /><Tile $color="#107c41">X</Tile></App_>
                <App_ aria-label="File Explorer" $mark={dot}><Explorer /></App_>
                <App_ aria-label="Microsoft Store"><Store /></App_>
                <App_ aria-label="Edge" $mark={dot}><Edge /></App_>
                <App_ aria-label="Word"><OfficeBack colors={['#41a5ee', '#2b7cd3', '#185abd', '#103f91']} /><Tile $color="#185abd">W</Tile></App_>
                <App_ aria-label="WhatsApp" $mark={dot}><WhatsApp /><Badge $wide>99+</Badge></App_>
                <App_ aria-label="Calculator" $mark={dot}><Calculator /></App_>
                <App_ aria-label="Telegram" $bg="#45292d" $mark="#ff99a4"><Telegram /><RedBadge>..49</RedBadge></App_>
                <App_ aria-label="WhatsApp 2" $mark={dot}><WhatsApp /><Badge>3</Badge></App_>
            </Apps>
            <Tray>
                <Overflow aria-label="Hidden icons"><Line w={24} h={14} box="0 0 24 14" d="M2 12L12 2l10 10" /></Overflow>
                <button aria-label="OneDrive"><Cloud /></button>
                <Language>ENG<br />US</Language>
                <Status aria-label="Network, sound, battery">
                    <Line w={32} h={26} box="0 0 32 26" d="M1 9a21 21 0 0130 0M6 14a14 14 0 0120 0M11 19a7 7 0 0110 0M16 23v1" />
                    <Line w={32} h={28} box="0 0 32 28" sw={2}>
                        <path d="M1 10v8h5l7 6V4l-7 6zM17 10q3 4 0 8" />
                        <path d="M20 6q6 8 0 16M25 2q8 12 0 24" opacity=".4" />
                    </Line>
                    <Battery />
                </Status>
                <Clock>5:13 pm<br />25/06/2023</Clock>
                <button aria-label="Notifications"><Bell /></button>
            </Tray>
        </Taskbar>
    );
}

export default function App() {
    return (
        <Desktop>
            <GlobalStyle />
            <Browser />
            <PageView>
                <Rail>
                    <FaMask size={34} />
                    <SidebarGlyph />
                </Rail>
                <Page>
                    <Nav>
                        {navItems.map(([name, Icon, count]) => (
                            <NavRow key={name} href="#nav" $current={name === 'Reports'}>
                                <Icon />
                                {name}
                                {count !== undefined && <Count $empty={count === 0}>{count}</Count>}
                            </NavRow>
                        ))}
                    </Nav>
                    <Panel>
                        <Sheet>
                            <Report>
                                <Group title="Income" rows={income} totalLabel="Total — Income" total="35,183.37" />
                                <Group title="Less: Expenses" rows={expenses} totalLabel="Total — Expenses" total="22,022.78" />
                                <tbody>
                                    <Spacer><td colSpan={2} /></Spacer>
                                    <NetRow>
                                        <th scope="row">Net profit (loss)</th>
                                        <td>13,160.59</td>
                                    </NetRow>
                                </tbody>
                            </Report>
                        </Sheet>
                    </Panel>
                </Page>
            </PageView>
            <TaskBar />
        </Desktop>
    );
}
